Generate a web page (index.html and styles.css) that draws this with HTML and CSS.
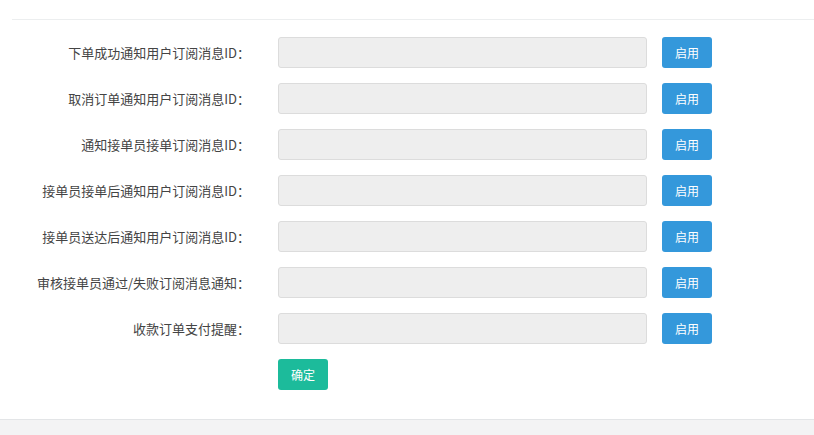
FILE: index.html
```html
<!DOCTYPE html>
<html lang="zh-CN">
<head>
<meta charset="utf-8">
<title>订阅消息设置</title>
<link rel="stylesheet" href="styles.css">
</head>
<body>
<div class="page">
  <div class="divider"></div>
  <form class="form">
    <div class="row">
      <label class="label">下单成功通知用户订阅消息ID：</label>
      <input class="input" type="text" disabled>
      <button type="button" class="btn btn-blue">启用</button>
    </div>
    <div class="row">
      <label class="label">取消订单通知用户订阅消息ID：</label>
      <input class="input" type="text" disabled>
      <button type="button" class="btn btn-blue">启用</button>
    </div>
    <div class="row">
      <label class="label">通知接单员接单订阅消息ID：</label>
      <input class="input" type="text" disabled>
      <button type="button" class="btn btn-blue">启用</button>
    </div>
    <div class="row">
      <label class="label">接单员接单后通知用户订阅消息ID：</label>
      <input class="input" type="text" disabled>
      <button type="button" class="btn btn-blue">启用</button>
    </div>
    <div class="row">
      <label class="label">接单员送达后通知用户订阅消息ID：</label>
      <input class="input" type="text" disabled>
      <button type="button" class="btn btn-blue">启用</button>
    </div>
    <div class="row">
      <label class="label">审核接单员通过/失败订阅消息通知：</label>
      <input class="input" type="text" disabled>
      <button type="button" class="btn btn-blue">启用</button>
    </div>
    <div class="row">
      <label class="label">收款订单支付提醒：</label>
      <input class="input" type="text" disabled>
      <button type="button" class="btn btn-blue">启用</button>
    </div>
    <div class="row">
      <span class="label"></span>
      <button type="button" class="btn btn-green">确定</button>
    </div>
  </form>
</div>
<div class="footer"></div>
</body>
</html>
```

FILE: styles.css
```css
html, body {
  margin: 0;
  padding: 0;
  background: #fff;
}
body {
  font-family: "Noto Sans CJK SC", "Liberation Sans", sans-serif;
  font-size: 13px;
  color: #444;
}
.page {
  padding-left: 12px;
  height: 419px;
  box-sizing: border-box;
}
.divider {
  height: 19px;
  border-bottom: 1px solid #eceeef;
}
.form {
  padding-top: 17px;
}
.row {
  display: flex;
  align-items: center;
  height: 31px;
  margin-bottom: 15px;
}
.label {
  width: 238px;
  text-align: right;
  flex: none;
  font-size: 13px;
  line-height: 31px;
  color: #444;
  margin-right: 28px;
  white-space: nowrap;
}
.input {
  width: 369px;
  height: 31px;
  box-sizing: border-box;
  border: 1px solid #dcdcdc;
  border-radius: 3px;
  background: #eee;
  margin: 0 15px 0 0;
  padding: 0 10px;
  flex: none;
}
.btn {
  width: 50px;
  height: 31px;
  border: none;
  border-radius: 3px;
  color: #fff;
  font-family: "Noto Sans CJK SC", "Liberation Sans", sans-serif;
  font-size: 12px;
  padding: 0;
  flex: none;
}
.btn-blue {
  background: #3498db;
}
.btn-green {
  background: #1cbb9b;
}
.footer {
  height: 16px;
  background: #f3f3f4;
  border-top: 1px solid #e3e5e7;
}
```
